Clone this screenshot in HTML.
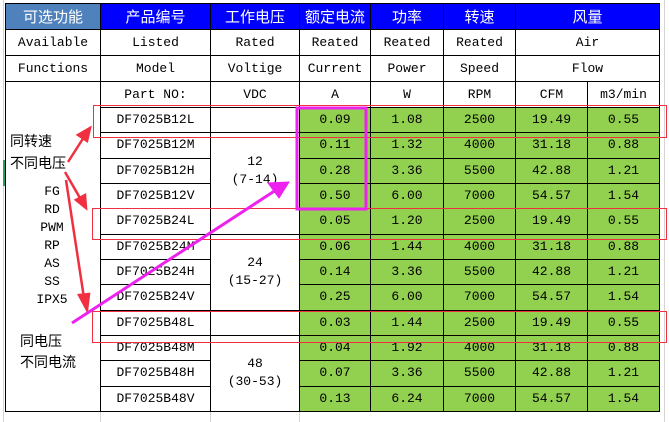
<!DOCTYPE html>
<html><head><meta charset="utf-8"><style>
body{margin:0;width:669px;height:422px;background:#fff;position:relative;overflow:hidden;font-family:"Liberation Mono","Noto Sans CJK SC",monospace;}
.grid{position:absolute;background:#d4d4d4;}
table{position:absolute;left:5px;top:3px;border-collapse:collapse;table-layout:fixed;font-size:13px;}
td{border:1px solid #000;text-align:center;padding:0;white-space:nowrap;overflow:hidden;line-height:14px;color:#000;}
td.v{line-height:18px;}
tr.h td{height:25px;}
tr.d td{height:24.33px;}
.hb td{background:#0000ff;color:#fff;font-family:"Noto Sans CJK SC","WenQuanYi Zen Hei",sans-serif;font-size:15px;}
.hb td.f{background:#4f81bd;}
.g{background:#92d050;}
.lbl{position:absolute;font-family:"Noto Sans CJK SC","WenQuanYi Zen Hei",sans-serif;font-size:14px;line-height:16px;}
.fn{position:absolute;left:30px;width:44px;text-align:center;font-size:13px;line-height:18px;top:183px;}
</style></head><body>
<div class="grid" style="left:3px;top:0;width:1px;height:422px"></div>
<div class="grid" style="left:664px;top:0;width:1px;height:422px"></div>
<div class="grid" style="left:100px;top:411px;width:1px;height:11px"></div>
<div class="grid" style="left:210px;top:411px;width:1px;height:11px"></div>
<div class="grid" style="left:299px;top:411px;width:1px;height:11px"></div>
<div style="position:absolute;left:3px;top:160px;width:2px;height:26px;background:#21a366"></div>
<table>
<colgroup><col style="width:95px"><col style="width:110px"><col style="width:89px"><col style="width:71px"><col style="width:73px"><col style="width:72px"><col style="width:72px"><col style="width:72px"></colgroup>
<tr class="h hb"><td class="f">可选功能</td><td>产品编号</td><td>工作电压</td><td>额定电流</td><td>功率</td><td>转速</td><td colspan="2">风量</td></tr>
<tr class="h"><td>Available</td><td>Listed</td><td>Rated</td><td>Reated</td><td>Reated</td><td>Reated</td><td colspan="2">Air</td></tr>
<tr class="h"><td>Functions</td><td>Model</td><td>Voltige</td><td>Current</td><td>Power</td><td>Speed</td><td colspan="2">Flow</td></tr>
<tr class="h"><td rowspan="13" style="border-bottom:1px solid #000"></td><td>Part NO:</td><td>VDC</td><td>A</td><td>W</td><td>RPM</td><td>CFM</td><td>m3/min</td></tr>
<tr class="d"><td>DF7025B12L</td><td></td><td class="g">0.09</td><td class="g">1.08</td><td class="g">2500</td><td class="g">19.49</td><td class="g">0.55</td></tr>
<tr class="d"><td>DF7025B12M</td><td rowspan="3" class="v">12<br>(7-14)</td><td class="g">0.11</td><td class="g">1.32</td><td class="g">4000</td><td class="g">31.18</td><td class="g">0.88</td></tr>
<tr class="d"><td>DF7025B12H</td><td class="g">0.28</td><td class="g">3.36</td><td class="g">5500</td><td class="g">42.88</td><td class="g">1.21</td></tr>
<tr class="d"><td>DF7025B12V</td><td class="g">0.50</td><td class="g">6.00</td><td class="g">7000</td><td class="g">54.57</td><td class="g">1.54</td></tr>
<tr class="d"><td>DF7025B24L</td><td></td><td class="g">0.05</td><td class="g">1.20</td><td class="g">2500</td><td class="g">19.49</td><td class="g">0.55</td></tr>
<tr class="d"><td>DF7025B24M</td><td rowspan="3" class="v">24<br>(15-27)</td><td class="g">0.06</td><td class="g">1.44</td><td class="g">4000</td><td class="g">31.18</td><td class="g">0.88</td></tr>
<tr class="d"><td>DF7025B24H</td><td class="g">0.14</td><td class="g">3.36</td><td class="g">5500</td><td class="g">42.88</td><td class="g">1.21</td></tr>
<tr class="d"><td>DF7025B24V</td><td class="g">0.25</td><td class="g">6.00</td><td class="g">7000</td><td class="g">54.57</td><td class="g">1.54</td></tr>
<tr class="d"><td>DF7025B48L</td><td></td><td class="g">0.03</td><td class="g">1.44</td><td class="g">2500</td><td class="g">19.49</td><td class="g">0.55</td></tr>
<tr class="d"><td>DF7025B48M</td><td rowspan="3" class="v">48<br>(30-53)</td><td class="g">0.04</td><td class="g">1.92</td><td class="g">4000</td><td class="g">31.18</td><td class="g">0.88</td></tr>
<tr class="d"><td>DF7025B48H</td><td class="g">0.07</td><td class="g">3.36</td><td class="g">5500</td><td class="g">42.88</td><td class="g">1.21</td></tr>
<tr class="d"><td>DF7025B48V</td><td class="g">0.13</td><td class="g">6.24</td><td class="g">7000</td><td class="g">54.57</td><td class="g">1.54</td></tr>
</table>
<div class="lbl" style="left:10px;top:133px">同转速</div>
<div class="lbl" style="left:10px;top:155px">不同电压</div>
<div class="fn">FG<br>RD<br>PWM<br>RP<br>AS<br>SS<br>IPX5</div>
<div class="lbl" style="left:20px;top:333px">同电压</div>
<div class="lbl" style="left:20px;top:354px">不同电流</div>
<svg width="669" height="422" style="position:absolute;left:0;top:0" xmlns="http://www.w3.org/2000/svg">
<g fill="none" stroke="#f03040" stroke-width="1">
<rect x="93.5" y="105.5" width="573" height="32"/>
<rect x="92.5" y="208.5" width="574" height="31"/>
<rect x="92.5" y="311.5" width="574" height="31"/>
</g>
<rect x="297" y="108" width="69" height="101" fill="none" stroke="#ee22ee" stroke-width="3"/>
<g stroke="#f03040" stroke-width="2.5" fill="#f03040">
<line x1="68" y1="162" x2="84" y2="137"/><polygon points="90,128 78,135 87,141"/>
<line x1="65" y1="172" x2="80" y2="198"/><polygon points="86,208 76,200 85,195"/>
<line x1="66" y1="180" x2="84" y2="298"/><polygon points="87,310 79,295 89,294"/>
</g>
<g fill="#ee22ee" stroke="#ee22ee">
<line x1="72" y1="323" x2="276" y2="190" stroke-width="3"/>
<polygon points="289,182 268,183 279,198"/>
</g>
</svg>
</body></html>
